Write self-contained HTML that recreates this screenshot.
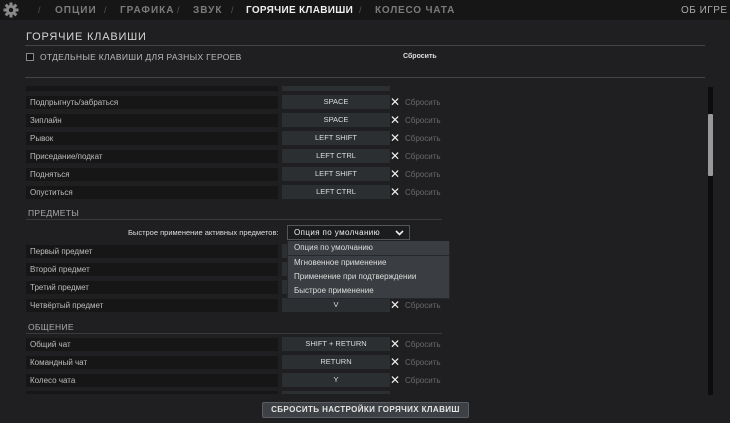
<!DOCTYPE html><html><head><meta charset="utf-8"><style>
*{margin:0;padding:0;box-sizing:border-box}
body{width:730px;height:423px;background:#1f1f21;font-family:"Liberation Sans","DejaVu Sans",sans-serif;position:relative;overflow:hidden;color:#c8c8c8}
.a{position:absolute;white-space:nowrap}
.top{left:0;top:0;width:730px;height:20px;background:#161617}
.nav{top:5px;font-size:10px;letter-spacing:1px;color:#7b7b7b;font-weight:bold}
.sl{top:5px;font-size:9px;color:#555}
.lab{left:26px;width:252px;height:13px;background:#161617;font-size:8px;line-height:13px;padding-left:4px;color:#bdbdbd}
.key{left:282px;width:108px;height:14px;background:#2c2f31;font-size:7.5px;line-height:14px;text-align:center;color:#ddd}
.x{left:390px;font-size:12px;font-weight:bold;color:#eee;line-height:14px}
.rs{left:405px;font-size:8px;line-height:13px;color:#6a6a6a}
.h{left:28px;font-size:8.5px;color:#aaa;letter-spacing:.3px}
.ln{height:1px;background:#3a3a3c}
.mi{left:288px;width:161px;height:14px;background:#3a3d41;font-size:8px;line-height:14px;padding-left:6px;color:#ddd}
</style></head><body>
<div class="a top"></div>
<svg class="a" style="left:3px;top:2px" width="16" height="16" viewBox="0 0 16 16"><g fill="#8a8a8a"><circle cx="8" cy="8" r="5"/><rect x="6.5" y="0.5" width="3" height="15"/><rect x="0.5" y="6.5" width="15" height="3"/><rect x="6.5" y="0.5" width="3" height="15" transform="rotate(45 8 8)"/><rect x="6.5" y="0.5" width="3" height="15" transform="rotate(-45 8 8)"/></g><circle cx="8" cy="8" r="2.2" fill="#161617"/></svg>
<div class="a sl" style="left:38px">/</div>
<div class="a nav" style="left:55px">ОПЦИИ</div>
<div class="a sl" style="left:104px">/</div>
<div class="a nav" style="left:120px">ГРАФИКА</div>
<div class="a sl" style="left:177px">/</div>
<div class="a nav" style="left:193px">ЗВУК</div>
<div class="a sl" style="left:231px">/</div>
<div class="a nav" style="left:246px;color:#eee;letter-spacing:.3px">ГОРЯЧИЕ КЛАВИШИ</div>
<div class="a sl" style="left:359px">/</div>
<div class="a nav" style="left:375px;letter-spacing:.8px">КОЛЕСО ЧАТА</div>
<div class="a nav" style="left:681px;font-weight:normal;color:#aaa;letter-spacing:.5px">ОБ ИГРЕ</div>
<div class="a" style="left:26px;top:31px;font-size:11px;letter-spacing:.8px;color:#d6d6d6">ГОРЯЧИЕ КЛАВИШИ</div>
<div class="a ln" style="left:25px;top:45px;width:680px;background:#444"></div>
<div class="a" style="left:26px;top:53px;width:8px;height:8px;border:1px solid #888;background:#111"></div>
<div class="a" style="left:40px;top:52px;font-size:8.5px;color:#bbb;letter-spacing:.3px">ОТДЕЛЬНЫЕ КЛАВИШИ ДЛЯ РАЗНЫХ ГЕРОЕВ</div>
<div class="a" style="left:403px;top:53px;font-size:7px;color:#ddd;font-weight:bold">Сбросить</div>
<div class="a ln" style="left:25px;top:77px;width:680px;background:#444"></div>
<div class="a" style="left:708px;top:87px;width:5px;height:308px;background:#0c0c0c"></div>
<div class="a" style="left:708px;top:114px;width:5px;height:62px;background:#999;border-radius:1px"></div>

<div class="a lab" style="top:86px;height:5px"></div><div class="a key" style="top:86px;height:5px"></div>

<div class="a lab" style="top:96px">Подпрыгнуть/забраться</div><div class="a key" style="top:95px">SPACE</div><div class="a x" style="top:95px">✕</div><div class="a rs" style="top:96px">Сбросить</div>
<div class="a lab" style="top:114px">Зиплайн</div><div class="a key" style="top:113px">SPACE</div><div class="a x" style="top:113px">✕</div><div class="a rs" style="top:114px">Сбросить</div>
<div class="a lab" style="top:132px">Рывок</div><div class="a key" style="top:131px">LEFT SHIFT</div><div class="a x" style="top:131px">✕</div><div class="a rs" style="top:132px">Сбросить</div>
<div class="a lab" style="top:150px">Приседание/подкат</div><div class="a key" style="top:149px">LEFT CTRL</div><div class="a x" style="top:149px">✕</div><div class="a rs" style="top:150px">Сбросить</div>
<div class="a lab" style="top:168px">Подняться</div><div class="a key" style="top:167px">LEFT SHIFT</div><div class="a x" style="top:167px">✕</div><div class="a rs" style="top:168px">Сбросить</div>
<div class="a lab" style="top:186px">Опуститься</div><div class="a key" style="top:185px">LEFT CTRL</div><div class="a x" style="top:185px">✕</div><div class="a rs" style="top:186px">Сбросить</div>

<div class="a h" style="top:208px">ПРЕДМЕТЫ</div>
<div class="a ln" style="left:26px;top:219px;width:416px"></div>
<div class="a" style="left:128px;top:228px;font-size:7.5px;color:#ddd">Быстрое применение активных предметов:</div>
<div class="a" style="left:287px;top:225px;width:123px;height:15px;background:#1a1c1d;border:1px solid #555;font-size:8px;line-height:13px;padding-left:6px;color:#eee;letter-spacing:.4px">Опция по умолчанию<svg style="position:absolute;right:5px;top:4px" width="9" height="6" viewBox="0 0 9 6"><path d="M1 1L4.5 4.5L8 1" stroke="#eee" stroke-width="1.6" fill="none"/></svg></div>

<div class="a lab" style="top:245px">Первый предмет</div><div class="a key" style="top:244px"></div>
<div class="a lab" style="top:263px">Второй предмет</div><div class="a key" style="top:262px"></div>
<div class="a lab" style="top:281px">Третий предмет</div><div class="a key" style="top:280px"></div>
<div class="a lab" style="top:299px">Четвёртый предмет</div><div class="a key" style="top:298px">V</div><div class="a x" style="top:298px">✕</div><div class="a rs" style="top:299px">Сбросить</div>

<div class="a" style="left:287px;top:241px;width:163px;height:58px;background:#26292b"></div>
<div class="a mi" style="top:241px">Опция по умолчанию</div>
<div class="a mi" style="top:256px">Мгновенное применение</div>
<div class="a mi" style="top:270px">Применение при подтверждении</div>
<div class="a mi" style="top:284px">Быстрое применение</div>

<div class="a h" style="top:322px">ОБЩЕНИЕ</div>
<div class="a ln" style="left:26px;top:333px;width:416px"></div>
<div class="a lab" style="top:338px">Общий чат</div><div class="a key" style="top:337px">SHIFT + RETURN</div><div class="a x" style="top:337px">✕</div><div class="a rs" style="top:338px">Сбросить</div>
<div class="a lab" style="top:356px">Командный чат</div><div class="a key" style="top:355px">RETURN</div><div class="a x" style="top:355px">✕</div><div class="a rs" style="top:356px">Сбросить</div>
<div class="a lab" style="top:374px">Колесо чата</div><div class="a key" style="top:373px">Y</div><div class="a x" style="top:373px">✕</div><div class="a rs" style="top:374px">Сбросить</div>
<div class="a lab" style="top:391px;height:3px"></div><div class="a key" style="top:391px;height:3px"></div>

<div class="a" style="left:262px;top:402px;width:207px;height:16px;background:#3d4145;border:1px solid #5a5e62;border-radius:2px;font-size:8px;font-weight:bold;line-height:14px;text-align:center;color:#e4e4e4;letter-spacing:.4px">СБРОСИТЬ НАСТРОЙКИ ГОРЯЧИХ КЛАВИШ</div>
</body></html>
